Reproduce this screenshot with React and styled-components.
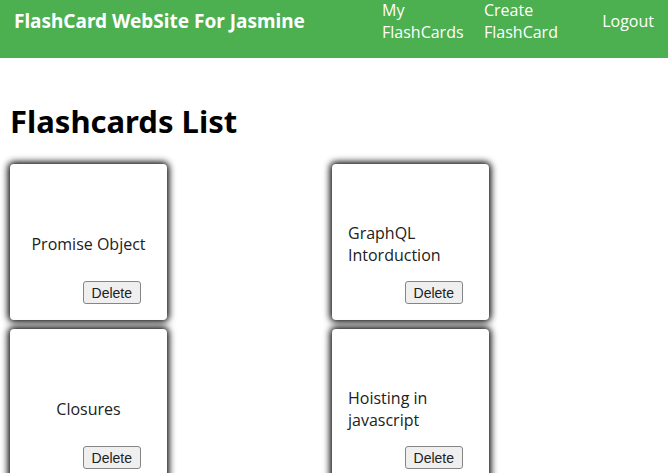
import React from "react";
import styled, { createGlobalStyle } from "styled-components";

const GlobalStyle = createGlobalStyle`
  * { box-sizing: border-box; }
  body {
    margin: 0;
    background: #fff;
    color: #000;
    font: 16px/22px "Segoe UI", "Open Sans", "Noto Sans", sans-serif;
  }
`;

const Header = styled.header`
  display: flex;
  align-items: center;
  justify-content: space-between;
  height: 58px;
  padding: 0 14px 16px;
  background: #4caf50;
  color: #fff;
`;

const Brand = styled.div`
  font-family: "Segoe UI", "Noto Sans", sans-serif;
  font-size: 19px;
  font-weight: 700;
`;

const Nav = styled.nav`
  display: flex;
  align-items: center;
`;

const NavLink = styled.a`
  width: ${({ $width }) => $width}px;
  color: inherit;
  text-decoration: none;
  text-align: ${({ $align }) => $align || "left"};
`;

const Main = styled.main`
  padding: 40px 14px 20px 10px;
`;

const Title = styled.h1`
  margin: 0 0 20px;
  font-family: "Segoe UI", "Noto Sans", sans-serif;
  font-size: 31px;
  line-height: 46px;
`;

const CardList = styled.ul`
  display: grid;
  grid-template-columns: 1fr 1fr;
  gap: 9px 0;
  margin: 0;
  padding: 0;
  list-style: none;
`;

const Card = styled.li`
  display: flex;
  flex-direction: column;
  align-items: center;
  width: 157px;
  height: 156px;
  padding: 42px 16px 16px;
  border-radius: 4px;
  background: #fff;
  box-shadow: 0 0 7px 2px #000;
`;

const CardText = styled.p`
  display: flex;
  flex: 1;
  align-items: center;
  max-width: 125px;
  margin: 0;
  color: #212121;
`;

const DeleteButton = styled.button`
  align-self: flex-end;
  height: 23px;
  margin-right: 10px;
  padding: 0 8px;
  border: 1px solid #858585;
  border-radius: 3px;
  background: #efefef;
  color: #212121;
  font: 14px/20px "Liberation Sans", Arial, sans-serif;
`;

const cards = ["Promise Object", "GraphQL Intorduction", "Closures", "Hoisting in javascript"];

export default function App() {
  return (
    <>
      <GlobalStyle />
      <Header>
        <Brand>FlashCard WebSite For Jasmine</Brand>
        <Nav>
          <NavLink href="#cards" $width={102}>My FlashCards</NavLink>
          <NavLink href="#create" $width={90}>Create FlashCard</NavLink>
          <NavLink href="#logout" $width={80} $align="right">Logout</NavLink>
        </Nav>
      </Header>
      <Main>
        <Title>Flashcards List</Title>
        <CardList>
          {cards.map((text) => (
            <Card key={text}>
              <CardText>{text}</CardText>
              <DeleteButton type="button">Delete</DeleteButton>
            </Card>
          ))}
        </CardList>
      </Main>
    </>
  );
}
